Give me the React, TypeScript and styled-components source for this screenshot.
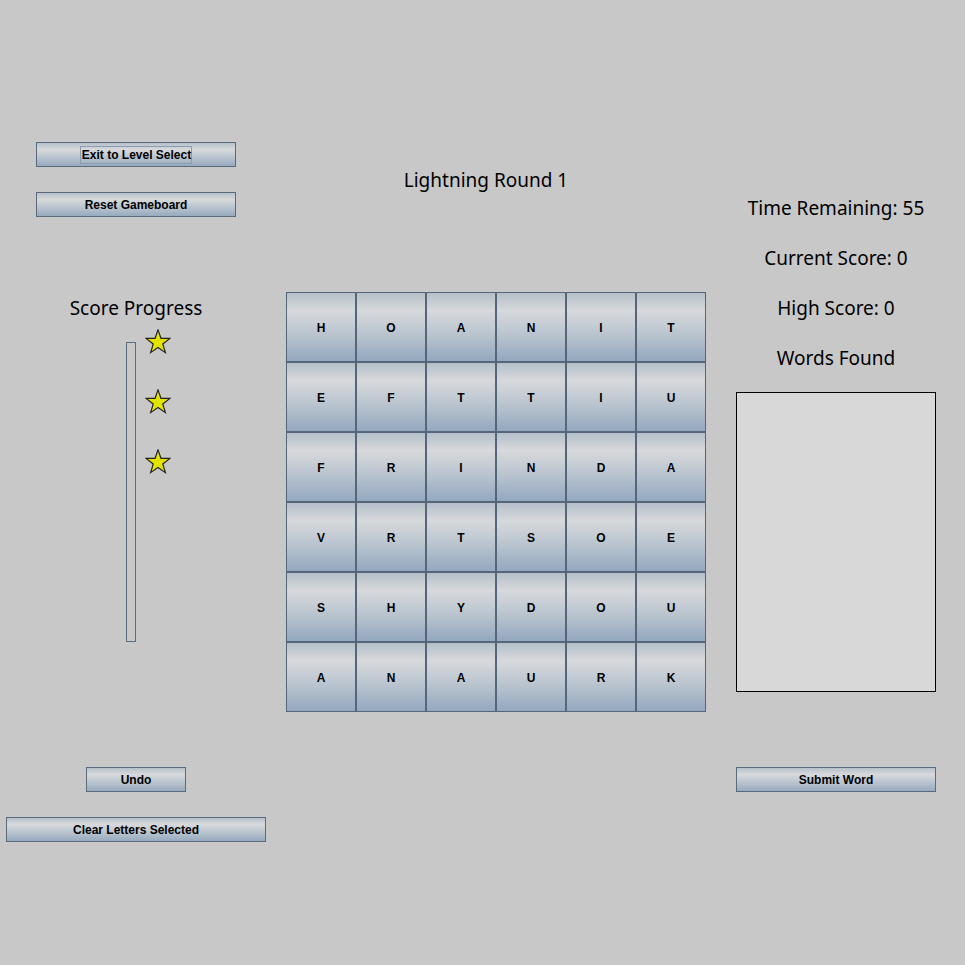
import React from "react";
import styled, { createGlobalStyle } from "styled-components";

const GlobalStyle = createGlobalStyle`
  html, body { margin: 0; padding: 0; background: #c8c8c8; }
  body { font-family: "Noto Sans", "DejaVu Sans", sans-serif; color: #000; }
`;

const Page = styled.div`
  width: 965px;
  height: 965px;
  box-sizing: border-box;
  padding-left: 6px;
  display: flex;
  align-items: flex-start;
  background: #c8c8c8;
  overflow: hidden;
`;

const Column = styled.div<{ $w: number; $ml?: number }>`
  width: ${(p) => p.$w}px;
  margin-left: ${(p) => p.$ml ?? 0}px;
  display: flex;
  flex-direction: column;
  align-items: center;
  flex-shrink: 0;
`;

const Button = styled.button<{ $w: number; $mt: number }>`
  width: ${(p) => p.$w}px;
  height: 25px;
  margin-top: ${(p) => p.$mt}px;
  box-sizing: border-box;
  border: 1px solid #5b6b7e;
  border-radius: 0;
  padding: 0;
  background: linear-gradient(
    to bottom,
    #b6c0ca 0%,
    #d7d9db 28%,
    #c0c9d2 55%,
    #97aabf 100%
  );
  font-family: "Liberation Sans", Arial, sans-serif;
  font-weight: bold;
  font-size: 12px;
  color: #000;
  display: flex;
  align-items: center;
  justify-content: center;
  cursor: pointer;
`;

const FocusLabel = styled.span`
  border: 1px solid #8a9db3;
  padding: 1px 0 1px 1px;
  line-height: 14px;
`;

const Label = styled.div<{ $mt: number }>`
  margin-top: ${(p) => p.$mt}px;
  height: 24px;
  line-height: 24px;
  font-size: 19px;
  white-space: nowrap;
`;

const Progress = styled.div`
  align-self: flex-start;
  margin-left: 120px;
  margin-top: 9px;
  display: flex;
  gap: 9px;
  height: 313px;
`;

const Bar = styled.div`
  margin-top: 13px;
  width: 10px;
  height: 300px;
  box-sizing: border-box;
  border: 1px solid #5b6b7e;
`;

const Stars = styled.div`
  display: flex;
  flex-direction: column;
  gap: 34px;
`;

const StarSvg = styled.svg`
  width: 26px;
  height: 26px;
  display: block;
`;

const Star = () => (
  <StarSvg viewBox="0 0 24 24">
    <polygon
      points="12,0.8 14.7,8.6 23,8.7 16.4,13.8 18.8,21.8 12,17 5.2,21.8 7.6,13.8 1,8.7 9.3,8.6"
      fill="#e3e300"
      stroke="#222"
      strokeWidth="1.1"
      strokeLinejoin="miter"
    />
  </StarSvg>
);

const Title = styled(Label)`
  align-self: center;
  margin-right: 20px;
`;

const Board = styled.div`
  margin-top: 100px;
  display: grid;
  grid-template-columns: repeat(6, 70px);
  grid-auto-rows: 70px;
`;

const Cell = styled.button`
  box-sizing: border-box;
  width: 70px;
  height: 70px;
  border: 1px solid #56667a;
  border-radius: 0;
  padding: 2px 0 0 0;
  background: linear-gradient(
    to bottom,
    #b5bfc9 0%,
    #d7d9db 26%,
    #bcc6d0 58%,
    #94a8bf 100%
  );
  font-family: "Liberation Sans", Arial, sans-serif;
  font-weight: bold;
  font-size: 12px;
  color: #000;
  cursor: pointer;
`;

const WordsBox = styled.div`
  margin-top: 22px;
  width: 200px;
  height: 300px;
  box-sizing: border-box;
  border: 1px solid #000;
  background: #d8d8d8;
`;

const letters = [
  "HOANIT",
  "EFTTIU",
  "FRINDA",
  "VRTSOE",
  "SHYDOU",
  "ANAURK",
];

export default function App() {
  return (
    <>
      <GlobalStyle />
      <Page>
        <Column $w={260}>
          <Button $w={200} $mt={142}>
            <FocusLabel>Exit to Level Select</FocusLabel>
          </Button>
          <Button $w={200} $mt={25}>Reset Gameboard</Button>
          <Label $mt={79}>Score Progress</Label>
          <Progress>
            <Bar />
            <Stars>
              <Star />
              <Star />
              <Star />
            </Stars>
          </Progress>
          <Button $w={100} $mt={125}>Undo</Button>
          <Button $w={260} $mt={25}>Clear Letters Selected</Button>
        </Column>
        <Column $w={420} $ml={20}>
          <Title $mt={168}>Lightning Round 1</Title>
          <Board>
            {letters.flatMap((row, r) =>
              row.split("").map((ch, c) => <Cell key={`${r}-${c}`}>{ch}</Cell>)
            )}
          </Board>
        </Column>
        <Column $w={200} $ml={30}>
          <Label $mt={196}>Time Remaining: 55</Label>
          <Label $mt={26}>Current Score: 0</Label>
          <Label $mt={26}>High Score: 0</Label>
          <Label $mt={26}>Words Found</Label>
          <WordsBox />
          <Button $w={200} $mt={75}>Submit Word</Button>
        </Column>
      </Page>
    </>
  );
}
